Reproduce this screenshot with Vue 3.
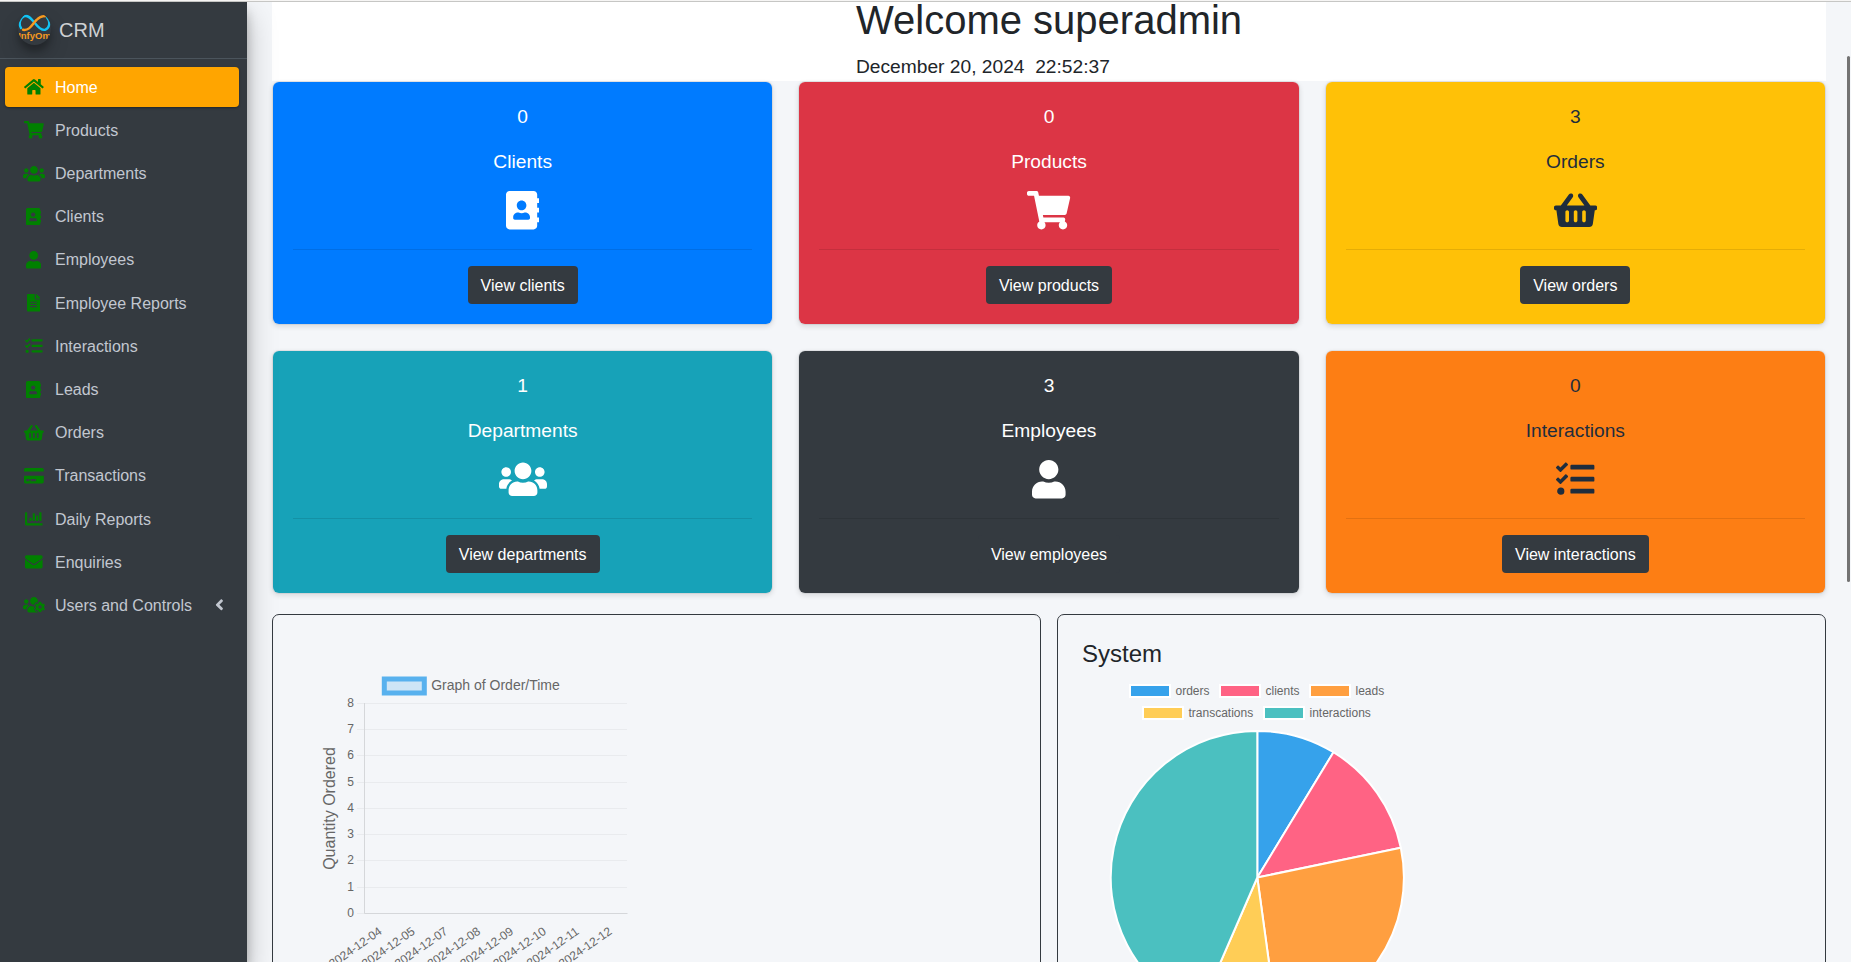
<script setup>
const icons = {
  home: { w: 576, d: 'M280.37 148.26L96 300.11V464a16 16 0 0 0 16 16l112.06-.29a16 16 0 0 0 15.92-16V368a16 16 0 0 1 16-16h64a16 16 0 0 1 16 16v95.64a16 16 0 0 0 16 16.05L464 480a16 16 0 0 0 16-16V300L295.67 148.26a12.19 12.19 0 0 0-15.3 0zM571.6 251.47L488 182.56V44.05a12 12 0 0 0-12-12h-56a12 12 0 0 0-12 12v72.61L318.47 43a48 48 0 0 0-61 0L4.34 251.47a12 12 0 0 0-1.6 16.9l25.5 31A12 12 0 0 0 45.15 301l235.22-193.74a12.19 12.19 0 0 1 15.3 0L530.9 301a12 12 0 0 0 16.9-1.6l25.5-31a12 12 0 0 0-1.7-16.93z' },
  cart: { w: 576, d: 'M528.12 301.319l47.273-208C578.806 78.301 567.391 64 551.99 64H159.208l-9.166-44.81C147.758 8.021 137.93 0 126.529 0H24C10.745 0 0 10.745 0 24v16c0 13.255 10.745 24 24 24h69.883l70.248 343.435C147.325 417.1 136 435.222 136 456c0 30.928 25.072 56 56 56s56-25.072 56-56c0-15.674-6.447-29.835-16.824-40h209.647C430.447 426.165 424 440.326 424 456c0 30.928 25.072 56 56 56s56-25.072 56-56c0-22.172-12.888-41.332-31.579-50.405l5.517-24.276c3.413-15.018-8.002-29.319-23.403-29.319H218.117l-6.545-32h293.145c11.206 0 20.92-7.754 23.403-18.681z' },
  users: { w: 640, d: 'M96 224c35.3 0 64-28.7 64-64s-28.7-64-64-64-64 28.7-64 64 28.7 64 64 64zm448 0c35.3 0 64-28.7 64-64s-28.7-64-64-64-64 28.7-64 64 28.7 64 64 64zm32 32h-64c-17.6 0-33.5 7.1-45.1 18.6 40.3 22.1 68.9 62 75.1 109.4h66c17.7 0 32-14.3 32-32v-32c0-35.3-28.7-64-64-64zm-256 0c61.9 0 112-50.1 112-112S381.9 32 320 32 208 82.1 208 144s50.1 112 112 112zm76.8 32h-8.3c-20.8 10-43.9 16-68.5 16s-47.6-6-68.5-16h-8.3C179.6 288 128 339.6 128 403.2V432c0 26.5 21.5 48 48 48h288c26.5 0 48-21.5 48-48v-28.8c0-63.6-51.6-115.2-115.2-115.2zm-223.7-13.4C161.5 263.1 145.6 256 128 256H64c-35.3 0-64 28.7-64 64v32c0 17.7 14.3 32 32 32h65.9c6.3-47.4 34.9-87.3 75.2-109.4z' },
  book: { w: 448, d: 'M436 160c6.6 0 12-5.4 12-12v-40c0-6.6-5.4-12-12-12h-20V48c0-26.5-21.5-48-48-48H48C21.5 0 0 21.5 0 48v416c0 26.5 21.5 48 48 48h320c26.5 0 48-21.5 48-48v-48h20c6.6 0 12-5.4 12-12v-40c0-6.6-5.4-12-12-12h-20v-64h20c6.6 0 12-5.4 12-12v-40c0-6.6-5.4-12-12-12h-20v-64h20zm-228-32c35.3 0 64 28.7 64 64s-28.7 64-64 64-64-28.7-64-64 28.7-64 64-64zm112 236.8c0 10.6-10 19.2-22.4 19.2H118.4C106 384 96 375.4 96 364.8v-19.2c0-31.8 30.1-57.6 67.2-57.6h5c12.3 5.1 25.7 8 39.8 8s27.6-2.9 39.8-8h5c37.1 0 67.2 25.8 67.2 57.6v19.2z' },
  user: { w: 448, d: 'M224 256c70.7 0 128-57.3 128-128S294.7 0 224 0 96 57.3 96 128s57.3 128 128 128zm89.6 32h-16.7c-22.2 10.2-46.9 16-72.9 16s-50.6-5.8-72.9-16h-16.7C60.2 288 0 348.2 0 422.4V464c0 26.5 21.5 48 48 48h352c26.5 0 48-21.5 48-48v-41.6c0-74.2-60.2-134.4-134.4-134.4z' },
  file: { w: 384, d: 'M224 136V0H24C10.7 0 0 10.7 0 24v464c0 13.3 10.7 24 24 24h336c13.3 0 24-10.7 24-24V160H248c-13.2 0-24-10.8-24-24zm64 236c0 6.6-5.4 12-12 12H108c-6.6 0-12-5.4-12-12v-8c0-6.6 5.4-12 12-12h168c6.6 0 12 5.4 12 12v8zm0-64c0 6.6-5.4 12-12 12H108c-6.6 0-12-5.4-12-12v-8c0-6.6 5.4-12 12-12h168c6.6 0 12 5.4 12 12v8zm0-72v8c0 6.6-5.4 12-12 12H108c-6.6 0-12-5.4-12-12v-8c0-6.6 5.4-12 12-12h168c6.6 0 12 5.4 12 12zm96-114.1v6.1H256V0h6.1c6.4 0 12.5 2.5 17 7l97.9 98c4.5 4.5 7 10.6 7 16.9z' },
  tasks: { w: 512, d: 'M139.61 35.5a12 12 0 0 0-17 0L58.93 98.81l-22.7-22.12a12 12 0 0 0-17 0L3.53 92.41a12 12 0 0 0 0 17l47.59 47.4a12.78 12.78 0 0 0 17.61 0l15.59-15.62L156.52 69a12.09 12.09 0 0 0 .09-17zm0 159.19a12 12 0 0 0-17 0l-63.68 63.72-22.7-22.1a12 12 0 0 0-17 0L3.53 252a12 12 0 0 0 0 17L51 316.5a12.77 12.77 0 0 0 17.6 0l15.7-15.69 72.2-72.22a12 12 0 0 0 .09-16.9zM64 368c-26.49 0-48.59 21.5-48.59 48S37.53 464 64 464a48 48 0 0 0 0-96zm432 16H208a16 16 0 0 0-16 16v32a16 16 0 0 0 16 16h288a16 16 0 0 0 16-16v-32a16 16 0 0 0-16-16zm0-320H208a16 16 0 0 0-16 16v32a16 16 0 0 0 16 16h288a16 16 0 0 0 16-16V80a16 16 0 0 0-16-16zm0 160H208a16 16 0 0 0-16 16v32a16 16 0 0 0 16 16h288a16 16 0 0 0 16-16v-32a16 16 0 0 0-16-16z' },
  basket: { w: 576, d: 'M576 216v16c0 13.255-10.745 24-24 24h-8l-26.113 182.788C514.509 462.435 494.257 480 470.37 480H105.63c-23.887 0-44.139-17.565-47.518-41.212L32 256h-8c-13.255 0-24-10.745-24-24v-16c0-13.255 10.745-24 24-24h67.341l106.78-146.821c10.395-14.292 30.407-17.453 44.701-7.058 14.293 10.395 17.453 30.408 7.058 44.701L170.477 192h235.046L326.12 82.821c-10.395-14.292-7.234-34.306 7.059-44.701 14.291-10.395 34.306-7.235 44.701 7.058L484.659 192H552c13.255 0 24 10.745 24 24zM312 392V280c0-13.255-10.745-24-24-24s-24 10.745-24 24v112c0 13.255 10.745 24 24 24s24-10.745 24-24zm112 0V280c0-13.255-10.745-24-24-24s-24 10.745-24 24v112c0 13.255 10.745 24 24 24s24-10.745 24-24zm-224 0V280c0-13.255-10.745-24-24-24s-24 10.745-24 24v112c0 13.255 10.745 24 24 24s24-10.745 24-24z' },
  card: { w: 576, d: 'M0 432c0 26.5 21.5 48 48 48h480c26.5 0 48-21.5 48-48V256H0v176zm192-68c0-6.6 5.4-12 12-12h136c6.6 0 12 5.4 12 12v40c0 6.6-5.4 12-12 12H204c-6.6 0-12-5.4-12-12v-40zm-128 0c0-6.6 5.4-12 12-12h72c6.6 0 12 5.4 12 12v40c0 6.6-5.4 12-12 12H76c-6.6 0-12-5.4-12-12v-40zM576 80v48H0V80c0-26.5 21.5-48 48-48h480c26.5 0 48 21.5 48 48z' },
  chart: { w: 512, d: 'M332.8 320h38.4c6.4 0 12.8-6.4 12.8-12.8V172.8c0-6.4-6.4-12.8-12.8-12.8h-38.4c-6.4 0-12.8 6.4-12.8 12.8v134.4c0 6.4 6.4 12.8 12.8 12.8zm96 0h38.4c6.4 0 12.8-6.4 12.8-12.8V76.8c0-6.4-6.4-12.8-12.8-12.8h-38.4c-6.4 0-12.8 6.4-12.8 12.8v230.4c0 6.4 6.4 12.8 12.8 12.8zm-288 0h38.4c6.4 0 12.8-6.4 12.8-12.8v-70.4c0-6.4-6.4-12.8-12.8-12.8h-38.4c-6.4 0-12.8 6.4-12.8 12.8v70.4c0 6.4 6.4 12.8 12.8 12.8zm96 0h38.4c6.4 0 12.8-6.4 12.8-12.8V108.8c0-6.4-6.4-12.8-12.8-12.8h-38.4c-6.4 0-12.8 6.4-12.8 12.8v198.4c0 6.4 6.4 12.8 12.8 12.8zM496 384H64V80c0-8.84-7.16-16-16-16H16C7.16 64 0 71.16 0 80v336c0 17.67 14.33 32 32 32h464c8.84 0 16-7.16 16-16v-32c0-8.84-7.16-16-16-16z' },
  envelope: { w: 512, d: 'M502.3 190.8c3.9-3.1 9.7-.2 9.7 4.7V400c0 26.5-21.5 48-48 48H48c-26.5 0-48-21.5-48-48V195.6c0-5 5.7-7.8 9.7-4.7 22.4 17.4 52.1 39.5 154.1 113.6 21.1 15.4 56.7 47.8 92.2 47.6 35.7.3 72-32.8 92.3-47.6 102-74.1 131.6-96.3 154-113.7zM256 320c23.2.4 56.6-29.2 73.4-41.4 132.7-96.3 142.8-104.7 173.4-128.7 5.8-4.5 9.2-11.5 9.2-18.9v-19c0-26.5-21.5-48-48-48H48c-26.5 0-48 21.5-48 48v19c0 7.4 3.4 14.3 9.2 18.9 30.6 23.9 40.7 32.4 173.4 128.7 16.8 12.2 50.2 41.8 73.4 41.4z' },
  cog: { w: 640, d: 'M610.5 341.3c2.6-14.1 2.6-28.5 0-42.6l25.8-14.9c3-1.7 4.3-5.2 3.3-8.5-6.7-21.6-18.2-41.2-33.2-57.4-2.3-2.5-6-3.1-9-1.4l-25.8 14.9c-10.9-9.3-23.4-16.5-36.9-21.3v-29.8c0-3.4-2.4-6.4-5.7-7.1-22.3-5-45-4.8-66.2 0-3.3.7-5.7 3.7-5.7 7.1v29.8c-13.5 4.8-26 12-36.9 21.3l-25.8-14.9c-2.9-1.7-6.7-1.1-9 1.4-15 16.2-26.5 35.8-33.2 57.4-1 3.3.4 6.8 3.3 8.5l25.8 14.9c-2.6 14.1-2.6 28.5 0 42.6l-25.8 14.9c-3 1.7-4.3 5.2-3.3 8.5 6.7 21.6 18.2 41.1 33.2 57.4 2.3 2.5 6 3.1 9 1.4l25.8-14.9c10.9 9.3 23.4 16.5 36.9 21.3v29.8c0 3.4 2.4 6.4 5.7 7.1 22.3 5 45 4.8 66.2 0 3.3-.7 5.7-3.7 5.7-7.1v-29.8c13.5-4.8 26-12 36.9-21.3l25.8 14.9c2.9 1.7 6.7 1.1 9-1.4 15-16.2 26.5-35.8 33.2-57.4 1-3.3-.4-6.8-3.3-8.5l-25.8-14.9zM496 368.5c-26.8 0-48.5-21.8-48.5-48.5s21.8-48.5 48.5-48.5 48.5 21.8 48.5 48.5-21.7 48.5-48.5 48.5zM96 224c35.3 0 64-28.7 64-64s-28.7-64-64-64-64 28.7-64 64 28.7 64 64 64zm224 32c1.9 0 3.7-.5 5.6-.6 8.3-21.7 20.5-42.1 36.3-59.2 7.4-8 17.9-12.6 28.9-12.6 6.9 0 13.7 1.8 19.6 5.3l7.9 4.6c.8-.5 1.6-.9 2.4-1.4 7-14.6 11.2-30.8 11.2-48 0-61.9-50.1-112-112-112S208 82.1 208 144c0 61.9 50.1 112 112 112zm105.2 194.5c-2.3-1.2-4.6-2.6-6.8-3.9-8.2 4.8-15.3 9.8-27.5 9.8-10.9 0-21.4-4.6-28.9-12.6-18.3-19.8-32.3-43.9-40.2-69.6-10.7-34.5 24.9-49.7 25.8-50.3-.1-2.6-.1-5.2 0-7.8l-7.9-4.6c-3.8-2.2-7-5-9.8-8.1-3.3.2-6.5.6-9.8.6-24.6 0-47.6-6-68.5-16h-8.3C179.6 288 128 339.6 128 403.2V432c0 26.5 21.5 48 48 48h255.4c-3.7-6-6.2-12.8-6.2-20.3v-9.2zM173.1 274.6C161.5 263.1 145.6 256 128 256H64c-35.3 0-64 28.7-64 64v32c0 17.7 14.3 32 32 32h65.9c6.3-47.4 34.9-87.3 75.2-109.4z' },
}

const nav = [
  ['Home', 'home'], ['Products', 'cart'], ['Departments', 'users'], ['Clients', 'book'],
  ['Employees', 'user'], ['Employee Reports', 'file'], ['Interactions', 'tasks'], ['Leads', 'book'],
  ['Orders', 'basket'], ['Transactions', 'card'], ['Daily Reports', 'chart'], ['Enquiries', 'envelope'],
  ['Users and Controls', 'cog'],
]

const cards = [
  { n: 0, title: 'Clients', icon: 'book', btn: 'View clients', cls: 'primary' },
  { n: 0, title: 'Products', icon: 'cart', btn: 'View products', cls: 'danger' },
  { n: 3, title: 'Orders', icon: 'basket', btn: 'View orders', cls: 'warning' },
  { n: 1, title: 'Departments', icon: 'users', btn: 'View departments', cls: 'info' },
  { n: 3, title: 'Employees', icon: 'user', btn: 'View employees', cls: 'dark' },
  { n: 0, title: 'Interactions', icon: 'tasks', btn: 'View interactions', cls: 'orange' },
]

const ticks = [8, 7, 6, 5, 4, 3, 2, 1, 0].map((v) => ({ v, y: Math.round(87.8 + (8 - v) * 26.25) + 0.5 }))
const dates = ['04', '05', '07', '08', '09', '10', '11', '12'].map((d, i) => ({
  text: '2024-12-' + d,
  x: 106.9 + i * 32.84,
}))

const legend = [
  { name: 'orders', color: '#36a2eb', x: 72, y: 0 },
  { name: 'clients', color: '#ff6384', x: 162, y: 0 },
  { name: 'leads', color: '#ff9f40', x: 252, y: 0 },
  { name: 'transcations', color: '#ffcd56', x: 85, y: 22 },
  { name: 'interactions', color: '#4bc0c0', x: 206, y: 22 },
]

const cx = 199.3
const cy = 203.5
const r = 146.6
const totals = [2, 3, 6, 2, 10]
const sum = totals.reduce((a, b) => a + b, 0)
let acc = 0
const point = (v) => {
  const a = (v / sum) * Math.PI * 2
  return `${cx + r * Math.sin(a)} ${cy - r * Math.cos(a)}`
}
const slices = totals.map((v, i) => {
  const d = `M${cx} ${cy}L${point(acc)}A${r} ${r} 0 ${v > sum / 2 ? 1 : 0} 1 ${point(acc + v)}Z`
  acc += v
  return { d, color: legend[i].color }
})
</script>

<template>
  <div class="page">
    <div class="topline"></div>
    <div class="shell">
      <aside class="sidebar">
        <div class="brand">
          <svg class="logo" viewBox="0 0 33 33">
            <g fill="none" stroke-width="2.4" stroke-linecap="round">
              <path d="M6 4.200C2 6 .4 12 3 16" stroke="#12c3f4" />
              <path d="M6 4.200C11 2.600 14 8 17 11.200C20 15 23.500 18.600 27 17.800C31.500 16.500 32.800 10 29 5.500" stroke="#12c3f4" />
              <path d="M5 17.800C12 19 14.500 11.500 18.500 8C21.500 5 24 3.800 27 4.200" stroke="#f79a1f" />
            </g>
            <text x="16.500" y="27" text-anchor="middle">InfyOm</text>
          </svg>
          <span class="brand-name">CRM</span>
        </div>
        <nav class="nav">
          <a v-for="([label, icon], i) in nav" :key="label" class="nav-link" :class="{ active: i === 0 }">
            <span class="nav-icon">
              <svg :viewBox="`0 0 ${icons[icon].w} 512`"><path :d="icons[icon].d" /></svg>
            </span>
            <span class="nav-label">{{ label }}</span>
            <svg v-if="i === nav.length - 1" class="chevron" viewBox="0 0 256 512">
              <path d="M31.7 239l136-136c9.400-9.400 24.600-9.400 33.900 0l22.600 22.600c9.400 9.400 9.400 24.600 0 33.900L127.900 256l96.400 96.400c9.400 9.400 9.400 24.600 0 33.900L201.700 409c-9.400 9.400-24.600 9.400-33.900 0l-136-136c-9.500-9.400-9.500-24.600-.1-34z" />
            </svg>
          </a>
        </nav>
      </aside>

      <main class="main">
        <header class="welcome">
          <div>
            <h1>Welcome superadmin</h1>
            <p>December 20, 2024&nbsp; 22:52:37</p>
          </div>
        </header>

        <section class="cards">
          <article v-for="c in cards" :key="c.title" class="card" :class="c.cls">
            <p>{{ c.n }}</p>
            <p class="title">{{ c.title }}</p>
            <svg class="card-icon" :viewBox="`0 0 ${icons[c.icon].w} 512`"><path :d="icons[c.icon].d" /></svg>
            <hr />
            <a class="btn">{{ c.btn }}</a>
          </article>
        </section>

        <section class="panels">
          <div class="panel">
            <svg class="chart" width="767" height="347" viewBox="0 0 767 347">
              <rect x="111.300" y="64" width="40" height="14" fill="#cee5f6" stroke="#58b1ee" stroke-width="5" />
              <text x="158.200" y="75" class="t14">Graph of Order/Time</text>
              <g v-for="t in ticks" :key="t.v">
                <line x1="84" x2="354" :y1="t.y" :y2="t.y" stroke="#e9ebee" />
                <text x="81" :y="t.y + 3" text-anchor="end">{{ t.v }}</text>
              </g>
              <path d="M91.500 88V298.500H354.500" fill="none" stroke="#d5d7da" />
              <text class="t16" text-anchor="middle" transform="translate(62 193.500) rotate(-90)">Quantity Ordered</text>
              <text v-for="d in dates" :key="d.text" text-anchor="end" :transform="`translate(${d.x} 314) rotate(-35)`" dy="5">{{ d.text }}</text>
            </svg>
          </div>
          <div class="panel system">
            <h2>System</h2>
            <svg class="chart" width="767" height="290" viewBox="0 57 767 290">
              <g transform="translate(0 -.5)">
                <g v-for="l in legend" :key="l.name">
                  <rect :x="l.x" :y="l.y + 70.500" width="40" height="12" :fill="l.color" stroke="#fff" stroke-width="2" />
                  <text :x="l.x + 45.500" :y="l.y + 80">{{ l.name }}</text>
                </g>
              </g>
              <path v-for="s in slices" :key="s.d" :d="s.d" :fill="s.color" stroke="#fff" stroke-width="2" stroke-linejoin="bevel" transform="translate(0 59)" />
            </svg>
          </div>
        </section>
      </main>
    </div>
    <div class="scrollbar"></div>
  </div>
</template>

<style>
html,
body {
  margin: 0;
  overflow: hidden;
}
</style>

<style scoped>
.page {
  position: relative;
  display: flex;
  flex-direction: column;
  width: 1851px;
  height: 962px;
  overflow: hidden;
  box-sizing: border-box;
  background: #f4f6f9;
  color: #212529;
  font: 16px/24px "Liberation Sans", Arial, sans-serif;
}
.topline {
  flex: none;
  height: 1px;
  background: #f6f5f4;
  border-bottom: 1px solid #c6c6c4;
}
.shell {
  display: flex;
  height: 960px;
  overflow: hidden;
}
.sidebar {
  position: relative;
  z-index: 2;
  flex: none;
  width: 247px;
  background: #343a40;
  box-shadow: 0 14px 28px rgba(0, 0, 0, 0.25), 0 10px 10px rgba(0, 0, 0, 0.22);
}
.brand {
  display: flex;
  align-items: center;
  height: 56px;
  padding-left: 18px;
  border-bottom: 1px solid #4b545c;
}
.logo {
  width: 33px;
  height: 33px;
  margin-right: 8px;
  margin-bottom: 3px;
  border-radius: 50%;
  box-shadow: 0 10px 20px rgba(0, 0, 0, 0.19), 0 6px 6px rgba(0, 0, 0, 0.23);
  overflow: hidden;
}
.logo text {
  font: 700 9.5px "Liberation Sans", Arial, sans-serif;
  fill: #f79a1f;
}
.brand-name {
  font-size: 20px;
  line-height: 30px;
  color: #cfd1d3;
  margin-bottom: 1px;
}
.nav {
  display: flex;
  flex-direction: column;
  gap: 3.2px;
  padding: 8px 8px 0 5px;
}
.nav-link {
  display: flex;
  align-items: center;
  height: 40px;
  padding: 0 15.5px 0 16px;
  box-sizing: border-box;
  border-radius: 4px;
  color: #c2c7d0;
  white-space: nowrap;
}
.nav-link.active {
  background: #ffa500;
  color: #fff;
  box-shadow: 0 1px 3px rgba(0, 0, 0, 0.12), 0 1px 2px rgba(0, 0, 0, 0.24);
}
.nav-icon {
  display: flex;
  justify-content: center;
  width: 25.6px;
  margin-right: 8.4px;
}
.nav-icon svg {
  height: 17.6px;
  fill: #008000;
}
.nav-label {
  padding-top: 1.3px;
}
.chevron {
  height: 17.6px;
  margin-left: auto;
  fill: currentColor;
}
.main {
  flex: none;
  width: 1554px;
  margin-left: 25px;
}
.welcome {
  display: flex;
  justify-content: center;
  height: 79px;
  overflow: hidden;
  background: #fff;
}
.welcome > div {
  width: 386px;
  margin-top: -6px;
}
.welcome h1 {
  margin: 0 0 9px;
  font-size: 40px;
  font-weight: 400;
  line-height: 48px;
  white-space: nowrap;
}
.welcome p {
  margin: 0;
  font-size: 19.2px;
  line-height: 28.8px;
}
.cards {
  display: grid;
  grid-template-columns: repeat(3, 1fr);
  gap: 25px;
}
.card {
  display: flex;
  flex-direction: column;
  align-items: center;
  height: 244px;
  padding: 20px;
  box-sizing: border-box;
  border: 1px solid rgba(0, 0, 0, 0.06);
  background-clip: padding-box;
  border-radius: 7px;
  color: #fff;
  box-shadow: 0 2px 5px rgba(0, 0, 0, 0.1);
}
.card p {
  margin: 0;
  font-size: 19.2px;
  line-height: 29px;
}
.card .title {
  margin: 16px 0 15.3px;
}
.card-icon {
  height: 38.4px;
  fill: currentColor;
}
.card hr {
  width: 100%;
  height: 1px;
  margin: 19.3px 0 16px;
  border: 0;
  background: rgba(0, 0, 0, 0.1);
}
.btn {
  padding: 8px 13px 6px;
  border-radius: 4px;
  background: #343a40;
  color: #fff;
}
.primary {
  background-color: #007bff;
}
.danger {
  background-color: #dc3545;
}
.warning {
  background-color: #ffc107;
}
.info {
  background-color: #17a2b8;
}
.dark {
  background-color: #343a40;
}
.orange {
  background-color: #fd7e14;
}
.warning,
.orange {
  color: #1f2d3d;
}
.panels {
  display: grid;
  grid-template-columns: 1fr 1fr;
  gap: 16px;
  margin-top: 20px;
}
.panel {
  height: 420px;
  box-sizing: border-box;
  border: 1px solid #343a40;
  border-radius: 7px;
}
.chart {
  display: block;
}
.chart text {
  font-family: "Liberation Sans", Arial, sans-serif;
  font-size: 12px;
  fill: #666;
}
.chart .t14 {
  font-size: 14px;
}
.chart .t16 {
  font-size: 16px;
}
.system h2 {
  margin: 0;
  padding: 25px 0 3.2px 24px;
  font-size: 24px;
  font-weight: 400;
  line-height: 28.8px;
}
.scrollbar {
  position: absolute;
  top: 56px;
  right: 1px;
  width: 3px;
  height: 526px;
  border-radius: 2px;
  background: #737373;
}
</style>
